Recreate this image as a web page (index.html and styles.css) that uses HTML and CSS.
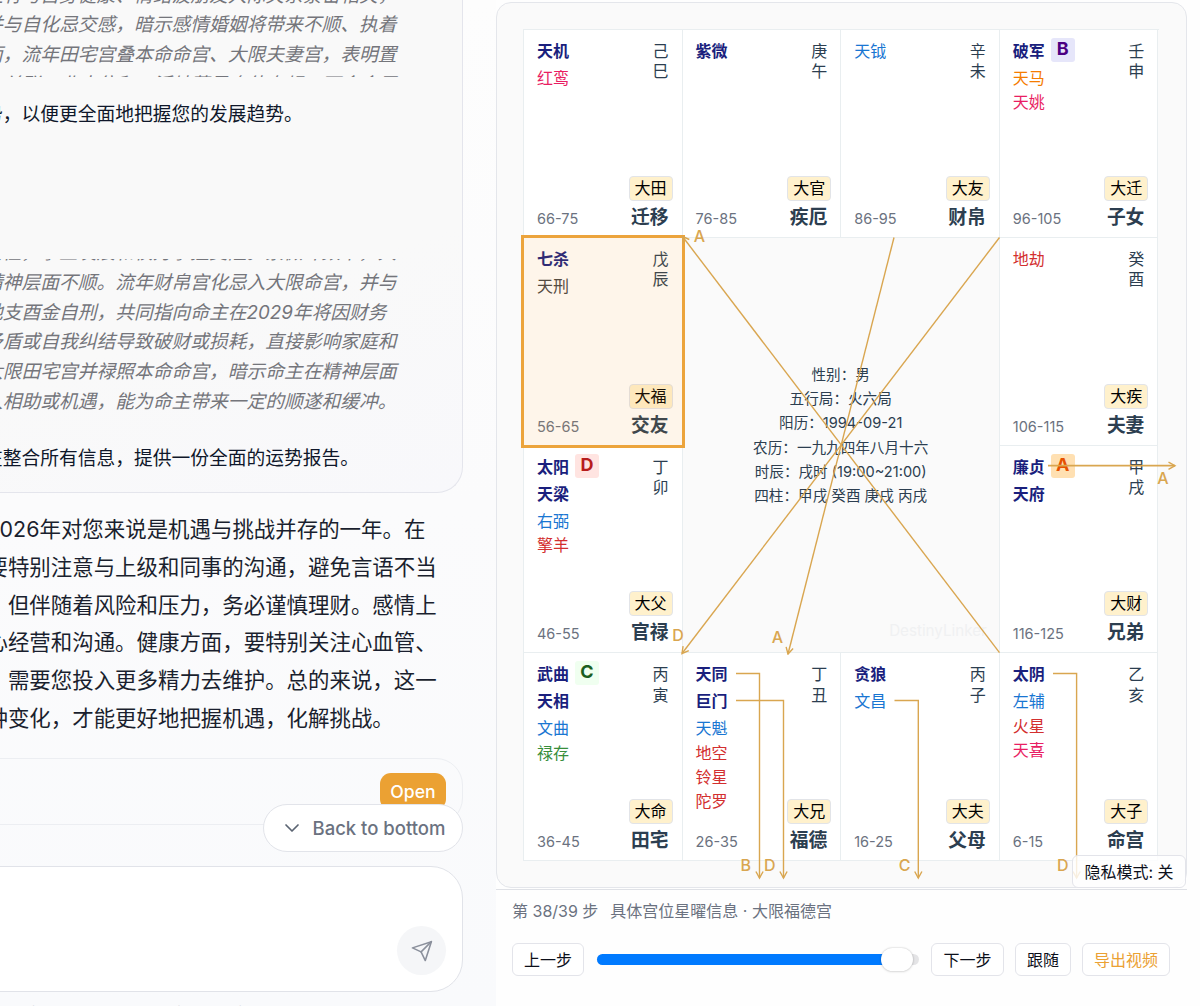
FILE: index.html
```html
<!DOCTYPE html>
<html lang="zh-CN">
<head>
<meta charset="utf-8">
<title>DestinyLinker</title>
<link rel="stylesheet" href="styles.css">
</head>
<body>
<main class="app">
  <section class="chat">
    <div class="report">
      <div class="thought thought-first">
        <p>注有与自身健康、情绪波朋友人际关系紧密相关，</p>
        <p>并与自化忌交感，暗示感情婚姻将带来不顺、执着</p>
        <p>面，流年田宅宫叠本命命宫、大限夫妻宫，表明置</p>
        <p>产关联，业本位和五活地落是身体右规，可命命居</p>
      </div>
      <p class="note note-first">势，以便更全面地把握您的发展趋势。</p>
      <div class="thought thought-second">
        <p>惰性，事业发展和权力掌控受阻。紫微斗数中，大</p>
        <p>精神层面不顺。流年财帛宫化忌入大限命宫，并与</p>
        <p>地支酉金自刑，共同指向命主在2029年将因财务</p>
        <p>矛盾或自我纠结导致破财或损耗，直接影响家庭和</p>
        <p>大限田宅宫并禄照本命命宫，暗示命主在精神层面</p>
        <p>人相助或机遇，能为命主带来一定的顺遂和缓冲。</p>
      </div>
      <p class="note note-second">在整合所有信息，提供一份全面的运势报告。</p>
    </div>
    <div class="answer">
      <p>2026年对您来说是机遇与挑战并存的一年。在</p>
      <p>要特别注意与上级和同事的沟通，避免言语不当</p>
      <p>，但伴随着风险和压力，务必谨慎理财。感情上</p>
      <p>心经营和沟通。健康方面，要特别关注心血管、</p>
      <p>，需要您投入更多精力去维护。总的来说，这一</p>
      <p>种变化，才能更好地把握机遇，化解挑战。</p>
    </div>
    <div class="attachment">
      <button class="open">Open</button>
      <button class="back">
        <svg class="chevron" viewBox="0 0 20 20"><path d="M4 7l6 6 6-6"/></svg>
        <span>Back to bottom</span>
      </button>
    </div>
    <div class="composer">
      <button class="send" aria-label="Send">
        <svg viewBox="0 0 24 24"><path d="M22.2 1.8L1.6 8.6L11 13L15.6 22.4Z"/><path d="M22.2 1.8L11 13"/></svg>
      </button>
    </div>
    <p class="hint">ces i a as a ma b and still make it</p>
  </section>

  <section class="viewer">
    <div class="stage">
      <div class="chart">
        <article class="cell">
          <ul class="stars"><li class="major">天机</li><li class="pink">红鸾</li></ul>
          <div class="stem">己<br>巳</div>
          <div class="foot"><span class="age">66-75</span><div class="place"><b class="tag">大田</b><strong>迁移</strong></div></div>
        </article>
        <article class="cell">
          <ul class="stars"><li class="major">紫微</li></ul>
          <div class="stem">庚<br>午</div>
          <div class="foot"><span class="age">76-85</span><div class="place"><b class="tag">大官</b><strong>疾厄</strong></div></div>
        </article>
        <article class="cell">
          <ul class="stars"><li class="blue">天钺</li></ul>
          <div class="stem">辛<br>未</div>
          <div class="foot"><span class="age">86-95</span><div class="place"><b class="tag">大友</b><strong>财帛</strong></div></div>
        </article>
        <article class="cell">
          <ul class="stars"><li class="major">破军<i class="mark mark-b">B</i></li><li class="orange">天马</li><li class="pink">天姚</li></ul>
          <div class="stem">壬<br>申</div>
          <div class="foot"><span class="age">96-105</span><div class="place"><b class="tag">大迁</b><strong>子女</strong></div></div>
        </article>
        <article class="cell active">
          <ul class="stars"><li class="major">七杀</li><li class="plain">天刑</li></ul>
          <div class="stem">戊<br>辰</div>
          <div class="foot"><span class="age">56-65</span><div class="place"><b class="tag">大福</b><strong>交友</strong></div></div>
        </article>
        <div class="center">
          <p>性别：男</p>
          <p>五行局：火六局</p>
          <p>阳历：1994-09-21</p>
          <p>农历：一九九四年八月十六</p>
          <p>时辰：戌时 (19:00~21:00)</p>
          <p>四柱：甲戌 癸酉 庚戌 丙戌</p>
          <span class="watermark">DestinyLinker</span>
        </div>
        <article class="cell">
          <ul class="stars"><li class="red">地劫</li></ul>
          <div class="stem">癸<br>酉</div>
          <div class="foot"><span class="age">106-115</span><div class="place"><b class="tag">大疾</b><strong>夫妻</strong></div></div>
        </article>
        <article class="cell">
          <ul class="stars"><li class="major">太阳<i class="mark mark-d">D</i></li><li class="major">天梁</li><li class="blue">右弼</li><li class="red">擎羊</li></ul>
          <div class="stem">丁<br>卯</div>
          <div class="foot"><span class="age">46-55</span><div class="place"><b class="tag">大父</b><strong>官禄</strong></div></div>
        </article>
        <article class="cell">
          <ul class="stars"><li class="major">廉贞<i class="mark mark-a">A</i></li><li class="major">天府</li></ul>
          <div class="stem">甲<br>戌</div>
          <div class="foot"><span class="age">116-125</span><div class="place"><b class="tag">大财</b><strong>兄弟</strong></div></div>
        </article>
        <article class="cell">
          <ul class="stars"><li class="major">武曲<i class="mark mark-c">C</i></li><li class="major">天相</li><li class="blue">文曲</li><li class="green">禄存</li></ul>
          <div class="stem">丙<br>寅</div>
          <div class="foot"><span class="age">36-45</span><div class="place"><b class="tag">大命</b><strong>田宅</strong></div></div>
        </article>
        <article class="cell">
          <ul class="stars"><li class="major">天同</li><li class="major">巨门</li><li class="blue">天魁</li><li class="red">地空</li><li class="red">铃星</li><li class="red">陀罗</li></ul>
          <div class="stem">丁<br>丑</div>
          <div class="foot"><span class="age">26-35</span><div class="place"><b class="tag">大兄</b><strong>福德</strong></div></div>
        </article>
        <article class="cell">
          <ul class="stars"><li class="major">贪狼</li><li class="blue">文昌</li></ul>
          <div class="stem">丙<br>子</div>
          <div class="foot"><span class="age">16-25</span><div class="place"><b class="tag">大夫</b><strong>父母</strong></div></div>
        </article>
        <article class="cell">
          <ul class="stars"><li class="major">太阴</li><li class="blue">左辅</li><li class="red">火星</li><li class="pink">天喜</li></ul>
          <div class="stem">乙<br>亥</div>
          <div class="foot"><span class="age">6-15</span><div class="place"><b class="tag">大子</b><strong>命宫</strong></div></div>
        </article>
      </div>
      <svg class="links" viewBox="496 2 691 886">
        <defs>
          <marker id="tip" viewBox="0 0 10 10" refX="8.5" refY="5" markerWidth="10" markerHeight="10" markerUnits="userSpaceOnUse" orient="auto">
            <path d="M2 1.4L8.5 5L2 8.6"/>
          </marker>
        </defs>
        <g class="wires">
          <path marker-end="url(#tip)" d="M999.5 652.7L682.5 236.5"/>
          <path marker-end="url(#tip)" d="M894 237.5L788 654"/>
          <path marker-end="url(#tip)" d="M999.5 237.5L682 653.5"/>
          <path class="thick" marker-end="url(#tip)" d="M1048 465.7H1175"/>
          <path marker-end="url(#tip)" d="M736 673.5H759.5V878"/>
          <path marker-end="url(#tip)" d="M736 700.5H783.5V878"/>
          <path marker-end="url(#tip)" d="M894.5 700.5H918.3V878"/>
          <path marker-end="url(#tip)" d="M1053 673.5H1076.6V878"/>
        </g>
        <g class="wire-names">
          <text x="699.5" y="242.3">A</text>
          <text x="678" y="640.5">D</text>
          <text x="777.3" y="643.3">A</text>
          <text x="1163" y="484">A</text>
          <text x="745.8" y="870.5">B</text>
          <text x="769.8" y="870.5">D</text>
          <text x="904.5" y="870.5">C</text>
          <text x="1062.8" y="870.5">D</text>
        </g>
      </svg>
      <button class="btn privacy">隐私模式: 关</button>
    </div>
    <footer class="player">
      <div class="status"><span>第 38/39 步</span><span>具体宫位星曜信息 · 大限福德宫</span></div>
      <div class="controls">
        <button class="btn prev">上一步</button>
        <div class="track"><div class="fill"></div><div class="thumb"></div></div>
        <button class="btn next">下一步</button>
        <button class="btn follow">跟随</button>
        <button class="btn export">导出视频</button>
      </div>
    </footer>
  </section>
</main>
</body>
</html>
```
FILE: styles.css
```css
* { box-sizing: border-box; margin: 0; padding: 0; }

body {
  width: 1200px;
  height: 1006px;
  overflow: hidden;
  font-family: Inter, "Noto Sans CJK SC", sans-serif;
  font-size: 16px;
  color: #0f172a;
  background: #fefefe;
}

button { font-family: inherit; font-size: inherit; color: inherit; }
p { white-space: nowrap; }

.app { display: flex; width: 1200px; height: 1006px; }

/* conversation column */
.chat {
  flex: none;
  display: flex;
  flex-direction: column;
  width: 496px;
  height: 1006px;
  padding-right: 33px;
  overflow: hidden;
  background: linear-gradient(#fdfdfd, #fbfbfc 50%, #f9fafc);
}

.report {
  flex: none;
  height: 493px;
  margin-left: -40px;
  padding-left: 23px;
  border: 1px solid #e4e5ec;
  border-top: 0;
  border-radius: 0 0 26px 0;
  background: linear-gradient(160deg, #f9f9f9 60%, #f8f8fb);
  font-size: 18.76px;
}

.thought { overflow: hidden; font-style: italic; color: #74757b; }
.thought p { line-height: 29.75px; }
.thought-first { height: 77px; }
.thought-first p:first-child { margin-top: -19.5px; }
.thought-second { height: 158px; margin-top: 129px; }
.thought-second p:first-child { margin-top: -21px; }
.note { line-height: 30px; }
.note-first { margin-top: 23px; }
.note-second { margin-top: 27px; }

.answer {
  flex: none;
  margin: 18px 0 0 -13.5px;
  font-size: 21.44px;
  color: #1a1f2e;
}
.answer p { line-height: 37.75px; }

.attachment {
  position: relative;
  flex: none;
  display: flex;
  justify-content: flex-end;
  height: 67px;
  margin: 20.5px 0 0 -40px;
  padding: 14px 16px 0 0;
  border: 1px solid #eceef2;
  border-radius: 27px;
}
.open {
  width: 66px;
  height: 37px;
  border: 0;
  border-radius: 11px;
  background: #eba133;
  color: #fff;
  font-size: 17.6px;
  font-weight: 500;
}
.back {
  position: absolute;
  right: -1px;
  top: 45px;
  display: flex;
  align-items: center;
  gap: 11px;
  width: 200px;
  height: 48px;
  padding-left: 17.5px;
  border: 1px solid #e2e4ea;
  border-radius: 24px;
  background: #fff;
  color: #6b7280;
  font-size: 18.5px;
  font-weight: 500;
  white-space: nowrap;
}
.chevron { width: 20px; height: 20px; flex: none; fill: none; stroke: #5b6472; stroke-width: 1.7; stroke-linecap: round; stroke-linejoin: round; }

.composer {
  flex: none;
  display: flex;
  justify-content: flex-end;
  align-items: flex-end;
  height: 126px;
  margin: 41px 0 0 -40px;
  padding: 0 16px 16px 0;
  border: 1px solid #e1e3e9;
  border-radius: 32px;
  background: #fff;
}
.send {
  display: flex;
  align-items: center;
  justify-content: center;
  width: 49px;
  height: 49px;
  border: 0;
  border-radius: 50%;
  background: #f5f6f8;
}
.send svg { width: 22px; height: 22px; fill: none; stroke: #8b909c; stroke-width: 1.7; stroke-linejoin: round; stroke-linecap: round; }
.hint { flex: none; margin-top: 10px; font-size: 16px; line-height: 20px; color: #9ca3af; }

/* chart viewer */
.viewer { flex: none; width: 691px; padding-top: 2px; background: #fefefe; }
.stage {
  position: relative;
  height: 886px;
  padding: 26px 0 0 26px;
  border: 1px solid #e4e6eb;
  border-radius: 15px;
  background: #fafafa;
}
.chart {
  display: grid;
  grid-template-columns: repeat(4, 158.6px);
  grid-template-rows: repeat(4, 207.75px);
  width: 636px;
  height: 832px;
  border-left: 1px solid #e9eef0;
  border-top: 1px solid #e9eef0;
}
.cell {
  position: relative;
  display: grid;
  grid-template-columns: 1fr auto;
  grid-template-rows: minmax(0, 1fr) auto;
  padding: 9px 13px 8px 13px;
  border-right: 1px solid #e9eef0;
  border-bottom: 1px solid #e9eef0;
  background: #fff;
}
.active::after {
  content: "";
  position: absolute;
  z-index: 2;
  inset: -3px -3px -3px -3px;
  border: 3px solid #eca43c;
  background: rgba(245, 160, 50, .1);
}

.stars { list-style: none; line-height: 24.35px; }
.stars li { height: 24.35px; }
.stars .major { height: 27px; font-weight: 700; color: #1a1f7d; }
.blue { color: #1976d2; }
.pink { color: #e91e63; }
.orange { color: #f57c00; }
.red { color: #d32f2f; }
.green { color: #388e3c; }
.plain { color: #424242; }

.mark {
  display: inline-block;
  width: 24px;
  height: 24px;
  margin: -1px 0 0 6px;
  border-radius: 3px;
  font-size: 18px;
  font-style: normal;
  line-height: 22px;
  text-align: center;
  vertical-align: top;
}
.mark-a { background: #ffe0b2; color: #e65100; }
.mark-b { background: #e6e6fa; color: #4b0082; }
.mark-c { background: #f0fff0; color: #1b5e20; }
.mark-d { background: #ffe4e1; color: #b71c1c; }

.stem { line-height: 20.4px; padding-top: 2px; color: #2c3e50; }

.foot { grid-column: 1 / 3; display: flex; justify-content: space-between; align-items: flex-end; }
.age { padding-bottom: 1px; font-size: 14.5px; line-height: 18px; color: #6b7280; }
.place { display: flex; flex-direction: column; align-items: flex-end; }
.tag {
  width: 44px;
  height: 25px;
  margin-right: -4px;
  border: 1px solid #e2e4e8;
  border-radius: 4px;
  background: #fff1cc;
  color: #000;
  font-weight: 400;
  line-height: 23px;
  text-align: center;
}
.place strong { margin-top: 6px; font-size: 18.76px; line-height: 22px; color: #2c3e50; }

.center {
  position: relative;
  grid-column: 2 / 4;
  grid-row: 2 / 4;
  display: flex;
  flex-direction: column;
  align-items: center;
  padding-top: 125px;
  border-right: 1px solid #e9eef0;
  border-bottom: 1px solid #e9eef0;
  font-size: 14.6px;
  line-height: 24.3px;
  color: #2c3e50;
}
.watermark { position: absolute; right: 12px; bottom: 9px; font-size: 15.2px; color: #f0f1f2; }

.links { position: absolute; z-index: 3; left: -1px; top: -1px; width: 691px; height: 886px; overflow: visible; }
.wires path, .links marker path { fill: none; stroke: #d9a650; stroke-width: 1.4; }
.wires .thick { stroke-width: 1.8; }
.wire-names text { fill: #d9a650; font-size: 16px; font-weight: 500; text-anchor: middle; }

.btn {
  height: 33px;
  padding-bottom: 2px;
  border: 1px solid #e3e4ea;
  border-radius: 6px;
  background: #fff;
  font-size: 16px;
  color: #0c0f1a;
  white-space: nowrap;
}
.privacy { position: absolute; z-index: 4; right: 0; bottom: -1px; width: 114px; background: rgba(255, 255, 255, .82); }

.player { padding: 11px 17px 0 16px; border-top: 1px solid #dfe1e6; margin-top: 1px; }
.status { display: flex; gap: 12px; margin-top: -1px; line-height: 22px; color: #6b7280; }
.controls { display: flex; align-items: center; margin-top: 21px; }
.prev { width: 72px; }
.track {
  position: relative;
  width: 322px;
  height: 11px;
  margin: 0 12px 0 13px;
  border-radius: 6px;
  background: #e4e4e6;
}
.fill { width: 295px; height: 11px; border-radius: 6px; background: #007aff; }
.thumb {
  position: absolute;
  left: 284px;
  top: -6px;
  width: 32px;
  height: 23px;
  border-radius: 12px;
  background: #fff;
  box-shadow: 0 0 2px rgba(0, 0, 0, .25), 0 1px 3px rgba(0, 0, 0, .08);
}
.next { width: 73px; margin-right: 11px; }
.follow { width: 56px; margin-right: 11px; }
.export { width: 88px; color: #eba133; }
```
